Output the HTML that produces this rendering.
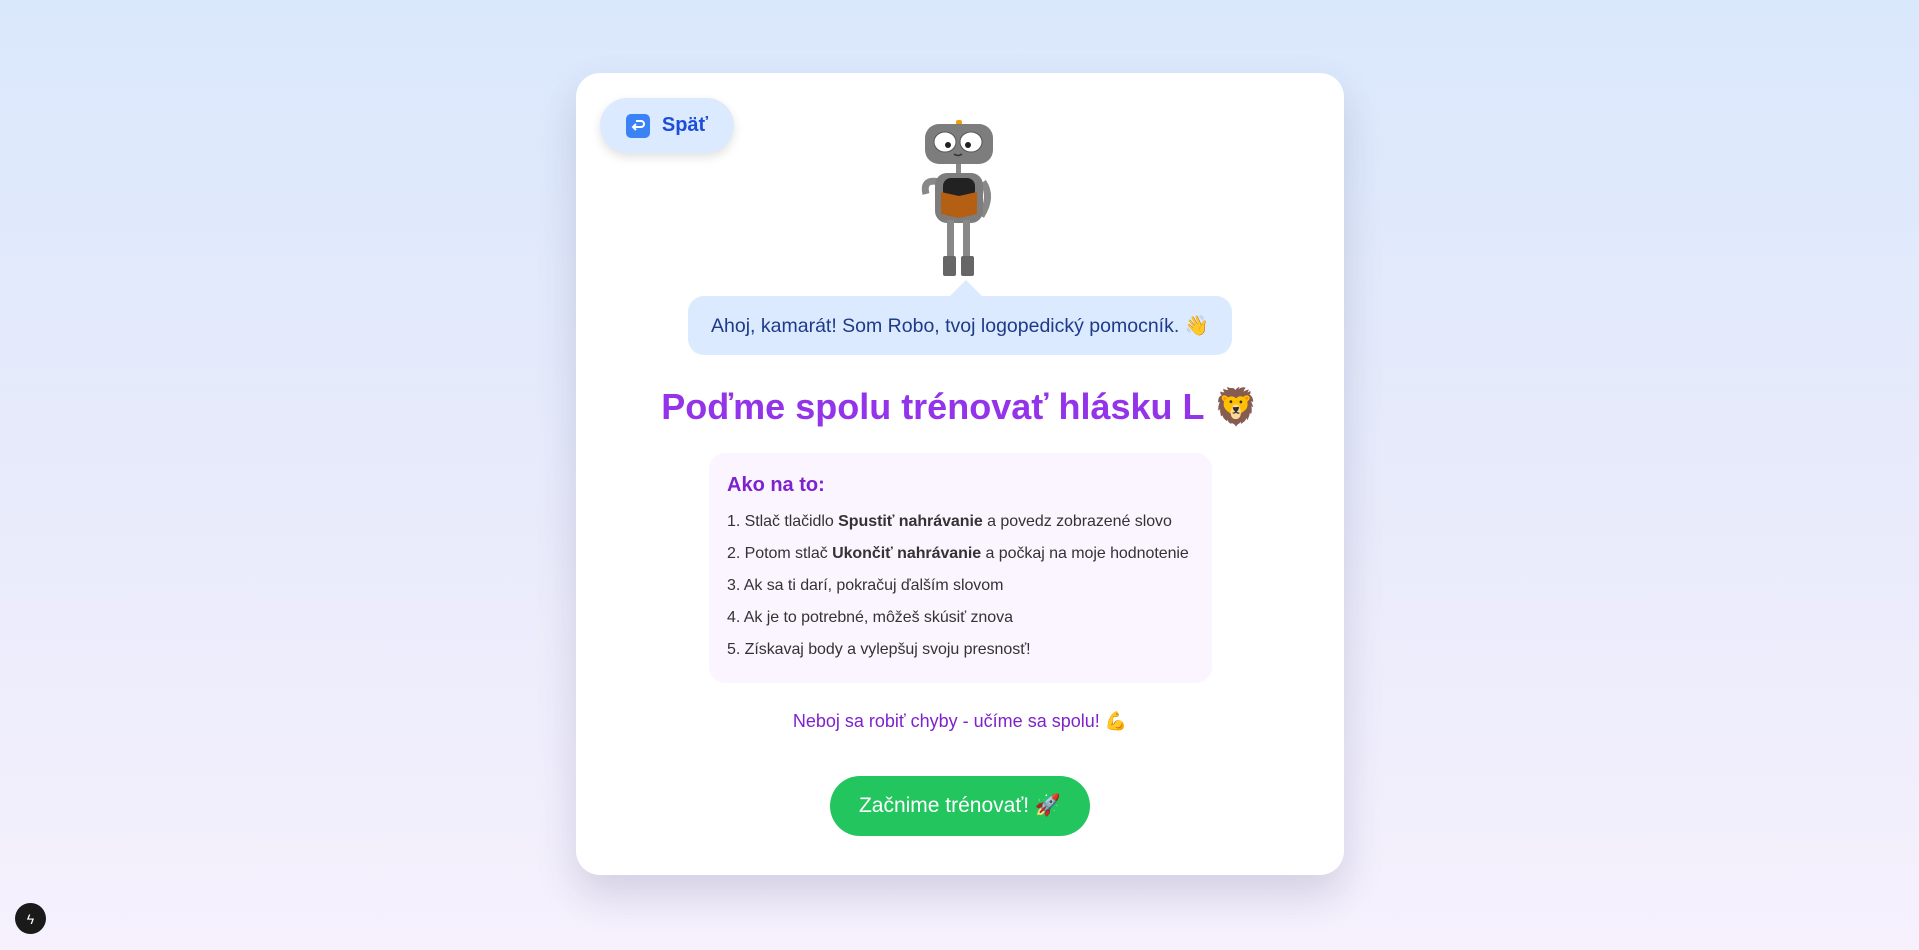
<!DOCTYPE html>
<html><head><meta charset="utf-8"><style>
*{box-sizing:border-box;margin:0;padding:0}
body{width:1919px;height:950px;overflow:hidden;font-family:"Liberation Sans",Arial,sans-serif;background:linear-gradient(180deg,#dae8fc 0%,#e9ebfb 55%,#f6f1fd 100%);position:relative}
.card{position:absolute;left:576px;top:73px;width:768px;height:802px;background:#fff;border-radius:24px;box-shadow:0 20px 40px rgba(60,60,110,.18)}
.back{position:absolute;left:24px;top:25px;width:134px;height:55px;border-radius:28px;background:#dbeafe;box-shadow:0 4px 10px rgba(0,0,0,.12);display:flex;align-items:center;justify-content:center;gap:12px;color:#1d4ed8;font-weight:bold;font-size:20px}
.ico{width:24px;height:24px;border-radius:5px;background:#3b82f6;display:flex;align-items:center;justify-content:center}
.bubble{position:absolute;left:112px;top:223px;width:544px;height:59px;background:#dbeafe;border-radius:16px;color:#1e3a8a;font-size:19.5px;display:flex;align-items:center;justify-content:center}
.bubble:before{content:"";position:absolute;left:262px;top:-16px;border:16px solid transparent;border-top:0;border-bottom-color:#dbeafe}
h1{position:absolute;left:0;width:768px;top:313px;text-align:center;color:#9333ea;font-size:36px;font-weight:bold}
.box{position:absolute;left:133px;top:380px;width:503px;height:230px;background:#faf5ff;border-radius:16px;padding:21px 18px}
.box h2{color:#7e22ce;font-size:20px;font-weight:bold;margin-bottom:15px}
.box p{color:#333;font-size:16px;line-height:19px;margin-bottom:13px;white-space:nowrap;letter-spacing:-0.05px}
.note{position:absolute;left:0;width:768px;top:638px;text-align:center;color:#7e22ce;font-size:18px}
.go{position:absolute;left:254px;top:703px;width:260px;height:60px;border-radius:30px;background:#22c55e;color:#fff;font-size:21px;display:flex;align-items:center;justify-content:center}
.dot{position:absolute;left:15px;top:903px;width:31px;height:31px;border-radius:50%;background:#1a1a1a;color:#fff;font-size:14px;display:flex;align-items:center;justify-content:center}
</style></head><body>
<div class="card">
<div class="back"><div class="ico"><svg width="16" height="16" viewBox="0 0 16 16"><path d="M6 3H11a3 3 0 0 1 0 6H4M6 6L3 9l3 3" stroke="#fff" stroke-width="2" fill="none"/></svg></div>Späť</div>
<svg style="position:absolute;left:337px;top:47px" width="90" height="162" viewBox="0 0 90 162">
<rect x="43" y="0" width="6" height="5" rx="2" fill="#f59e0b"/>
<rect x="12" y="4" width="68" height="40" rx="14" fill="#7d7d7d"/>
<ellipse cx="32" cy="22" rx="11" ry="10" fill="#fff" stroke="#555"/><ellipse cx="58" cy="22" rx="11" ry="10" fill="#fff" stroke="#555"/>
<circle cx="35" cy="25" r="3" fill="#222"/><circle cx="55" cy="25" r="3" fill="#222"/>
<path d="M41 34q4 3 8 0" stroke="#333" fill="none" stroke-width="1.5"/>
<rect x="43" y="44" width="5" height="10" fill="#888"/>
<path d="M27 62q-18 -4 -14 12" stroke="#888" stroke-width="7" fill="none"/>
<path d="M70 62q10 15 -2 34" stroke="#888" stroke-width="7" fill="none"/>
<rect x="22" y="53" width="48" height="50" rx="12" fill="#7d7d7d"/>
<rect x="30" y="58" width="32" height="38" rx="8" fill="#222"/>
<path d="M28 72l18 4l18-4v22l-18 4l-18-4z" fill="#b45f14"/>
<rect x="34" y="100" width="7" height="38" fill="#888"/><rect x="50" y="100" width="7" height="38" fill="#888"/>
<rect x="30" y="136" width="13" height="20" rx="2" fill="#666"/><rect x="48" y="136" width="13" height="20" rx="2" fill="#666"/>
</svg>
<div class="bubble">Ahoj, kamarát! Som Robo, tvoj logopedický pomocník. 👋</div>
<h1>Poďme spolu trénovať hlásku L 🦁</h1>
<div class="box"><h2>Ako na to:</h2>
<p>1. Stlač tlačidlo <b>Spustiť nahrávanie</b> a povedz zobrazené slovo</p>
<p>2. Potom stlač <b>Ukončiť nahrávanie</b> a počkaj na moje hodnotenie</p>
<p>3. Ak sa ti darí, pokračuj ďalším slovom</p>
<p>4. Ak je to potrebné, môžeš skúsiť znova</p>
<p>5. Získavaj body a vylepšuj svoju presnosť!</p></div>
<div class="note">Neboj sa robiť chyby - učíme sa spolu! 💪</div>
<div class="go">Začnime trénovať! 🚀</div>
</div>
<div class="dot">ϟ</div>
</body></html>
